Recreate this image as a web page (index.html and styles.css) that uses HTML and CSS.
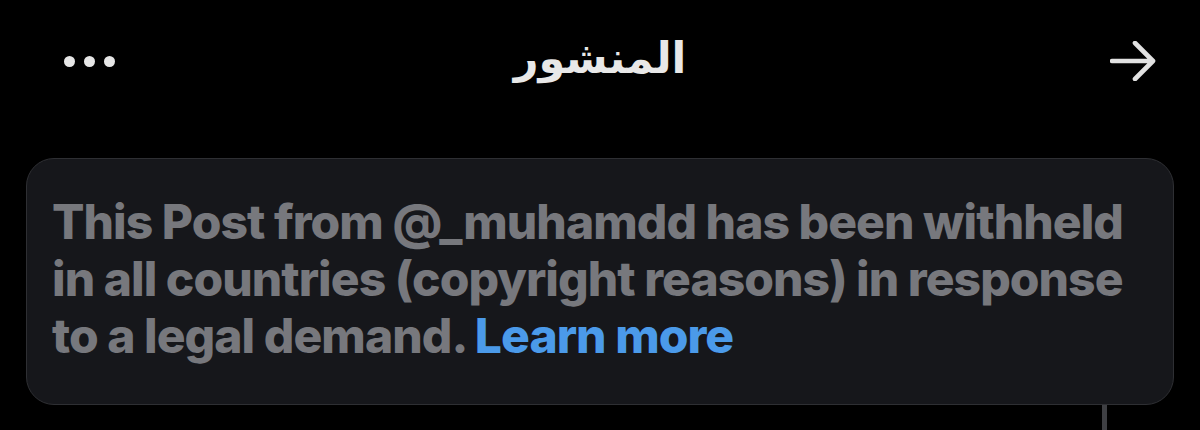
FILE: index.html
```html
<!DOCTYPE html>
<html lang="ar">
<head>
<meta charset="utf-8">
<link rel="stylesheet" href="styles.css">
</head>
<body>
<div class="screen">
  <header class="topbar">
    <div class="more" aria-label="More">
      <span class="dot"></span><span class="dot"></span><span class="dot"></span>
    </div>
    <h1 class="title" dir="rtl">المنشور</h1>
    <svg class="arrow" width="46" height="40" viewBox="0 0 46 40" aria-hidden="true">
      <path d="M2 20 H42 M25 2 L43 20 L25 38" fill="none" stroke="#e2e2e2" stroke-width="4.6" stroke-linecap="round" stroke-linejoin="round"/>
    </svg>
  </header>
  <div class="card" lang="en" dir="ltr">
    <p class="msg">This Post from @_muhamdd has been withheld in all countries (copyright reasons) in response to a legal demand. <a class="link">Learn more</a></p>
  </div>
  <div class="thread-line"></div>
</div>
</body>
</html>
```

FILE: styles.css
```css
html, body {
  margin: 0;
  padding: 0;
  background: #000;
}
.screen {
  width: 1200px;
  height: 430px;
  overflow: hidden;
  background: #000;
  display: flex;
  flex-direction: column;
}
.topbar {
  height: 122px;
  flex: none;
  display: flex;
  align-items: center;
  justify-content: space-between;
  padding: 0 44px 0 64px;
  box-sizing: border-box;
  position: relative;
}
.more {
  display: flex;
  gap: 9px;
}
.dot {
  width: 11px;
  height: 11px;
  border-radius: 50%;
  background: #e6e6e6;
}
.title {
  position: absolute;
  left: 0;
  right: 0;
  top: 28px;
  margin: 0;
  text-align: center;
  font-family: "DejaVu Sans", sans-serif;
  font-weight: 700;
  font-size: 43px;
  line-height: 60px;
  color: #e8e8e8;
  pointer-events: none;
}
.arrow {
  display: block;
}
.card {
  flex: none;
  margin: 36px 26px 0 26px;
  height: 247px;
  box-sizing: border-box;
  background: #16171b;
  border: 1.5px solid #2e2f33;
  border-radius: 28px;
  padding: 34px 24px 0 25px;
}
.msg {
  margin: 0;
  font-family: Inter, "Liberation Sans", sans-serif;
  font-weight: 800;
  font-size: 48px;
  line-height: 57px;
  letter-spacing: -0.95px;
  color: #77787d;
}
.link {
  display: inline-block;
  color: #4b9ae9;
  text-decoration: none;
}
.thread-line {
  flex: none;
  width: 5px;
  height: 30px;
  margin-left: 1102px;
  background: #3e3f43;
}
```
